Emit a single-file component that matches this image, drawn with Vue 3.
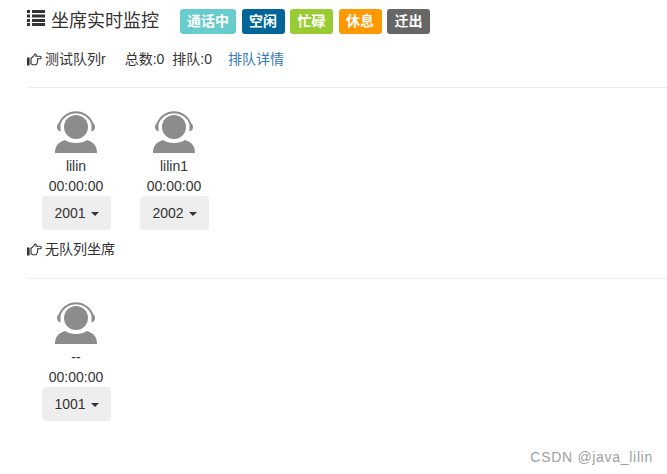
<script setup>
const legend = [
  { label: '通话中', color: '#68cccc', width: 56 },
  { label: '空闲', color: '#006699', width: 43 },
  { label: '忙碌', color: '#99cc33', width: 43 },
  { label: '休息', color: '#ff9900', width: 43 },
  { label: '迁出', color: '#666666', width: 43 }
]
const groups = [
  { id: 'q1', label: '测试队列r', stats: true, agents: [{ name: 'lilin', ext: '2001' }, { name: 'lilin1', ext: '2002' }] },
  { id: 'q2', label: '无队列坐席', stats: false, agents: [{ name: '--', ext: '1001' }] }
]
</script>

<template>
  <div class="page">
    <header class="head">
      <svg class="list-icon" width="18" height="17" viewBox="0 0 18 17">
        <path fill="#333" d="M0 1h3v3H0zM0 5.500h3v3H0zM0 10h3v3H0zM0 14h3v3H0zM5 1h13v3H5zM5 5.500h13v3H5zM5 10h13v3H5zM5 14h13v3H5z" />
      </svg>
      <h1 class="title">坐席实时监控</h1>
      <div class="legend">
        <span v-for="l in legend" :key="l.label" class="tag" :style="{ background: l.color, width: l.width + 'px' }">{{ l.label }}</span>
      </div>
    </header>

    <section v-for="g in groups" :key="g.id" class="group">
      <div class="queue">
        <svg class="hand" width="15" height="13" viewBox="0 0 15 13">
          <path fill="#333" d="M0 4.500h2.600v8H0z" />
          <path fill="none" stroke="#333" stroke-width="1.100" d="M4 5.500 6.500 3.200 7.800 1.200c1-.6 1.800.4 1.200 2h4c1.700 0 1.700 2.600 0 2.600h-2.400c.3 2.200-.2 4.600-1.500 6H5.600L4 10.800z" />
        </svg>
        <span>{{ g.label }}</span>
        <template v-if="g.stats">
          <span class="count">总数:0</span>
          <span class="wait">排队:0</span>
          <a class="detail">排队详情</a>
        </template>
      </div>
      <hr class="rule" />
      <div class="agents">
        <div v-for="a in g.agents" :key="a.ext" class="agent">
          <svg class="avatar" width="42" height="41" viewBox="0 0 42 41">
            <path fill="#8c8c8c" d="M0 41c0-7 3-10.500 10-13 2.500 2 6.500 3 11 3s8.500-1 11-3c7 2.500 10 6 10 13z" />
            <circle cx="21" cy="15" r="14" fill="#fff" />
            <circle cx="21" cy="15" r="12" fill="#8c8c8c" />
            <path fill="none" stroke="#8c8c8c" stroke-width="2" d="M4.500 12A17.500 17.500 0 0 1 37.500 12" />
            <path fill="#8c8c8c" d="M5.500 10.500C3.500 11 2 12.500 2 15s1.500 4 3.500 4.500zM36.500 10.500c2 .5 3.500 2 3.500 4.500s-1.500 4-3.500 4.500z" />
          </svg>
          <div class="name">{{ a.name }}</div>
          <div class="time">00:00:00</div>
          <button class="ext">{{ a.ext }}<i class="caret"></i></button>
        </div>
      </div>
    </section>

    <div class="watermark">CSDN @java_lilin</div>
  </div>
</template>

<style>
html, body { margin: 0; background: #fff; }
</style>

<style scoped>
.page {
  position: relative;
  height: 474px;
  overflow: hidden;
  box-sizing: border-box;
  padding: 9px 0 0 27px;
  font-family: "Liberation Sans", "Noto Sans CJK SC", sans-serif;
  font-size: 14px;
  color: #333;
}
.head { display: flex; align-items: center; height: 25px; }
.list-icon { margin-right: 6px; align-self: flex-start; }
.title { margin: 0; font-size: 18px; font-weight: 400; line-height: 25px; width: 129px; white-space: nowrap; }
.legend { display: flex; gap: 5.5px; }
.tag {
  height: 25px; line-height: 25px; text-align: center; color: #fff;
  font-weight: 700; font-size: 14px; border-radius: 3px;
}
.queue { display: flex; align-items: center; height: 18px; line-height: 18px; }
.group:first-of-type .queue { margin-top: 16px; }
.group + .group .queue { margin-top: 10px; }
.hand { margin-right: 3px; }
.count { margin-left: 19px; }
.wait { margin-left: 8px; }
.detail { margin-left: 16px; color: #337ab7; }
.rule { border: 0; border-top: 1px solid #eee; margin: 19px 0 24px; }
.group + .group .rule { margin-top: 20px; }
.agents { display: flex; padding-left: 15px; gap: 29px; }
.agent { width: 69px; display: flex; flex-direction: column; align-items: center; }
.avatar { display: block; overflow: visible; margin-right: 1px; }
.name, .time { height: 20px; line-height: 20px; white-space: nowrap; margin-right: 1px; }
.name { margin-top: 3px; }
.ext {
  width: 69px; height: 34px; padding: 0; border: 0; border-radius: 4px;
  background: #eee; color: #333; font: inherit;
}
.caret {
  display: inline-block; width: 0; height: 0; margin-left: 5px; vertical-align: middle;
  border-top: 4px solid #333; border-left: 4px solid transparent; border-right: 4px solid transparent;
}
.watermark {
  position: absolute; right: 14px; top: 449px; font-size: 14px; line-height: 16px;
  color: #a0a0a0; letter-spacing: 0.7px;
}
</style>
